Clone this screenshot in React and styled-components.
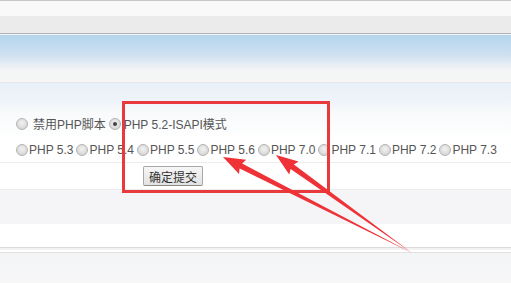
import React from 'react';
import styled, {createGlobalStyle} from 'styled-components';

const Global = createGlobalStyle`
	html, body {
		margin: 0;
		padding: 0;
		background: #fff;
	}
	body {
		font-family: "Liberation Sans", "Noto Sans CJK SC", sans-serif;
		font-size: 12px;
		color: #555;
	}
`;

const Page = styled.div`
	position: relative;
	width: 511px;
	height: 283px;
	overflow: hidden;
	display: flex;
	flex-direction: column;
`;

const TopBar = styled.div`
	height: 34px;
	box-sizing: border-box;
	border-top: 1px solid #c8c8c8;
	border-bottom: 1px solid #aeb4ba;
	background: linear-gradient(#f9f9f9 0, #f9f9f9 15px, #ebebeb 15px, #ebebeb 100%);
`;

const BlueBand = styled.div`
	height: 47px;
	border-top: 1px solid #f6f6f6;
	background: linear-gradient(#b4d5ee 0%, #cddff0 40%, #f4f5f6 75%, #f6f6f6 100%);
	border-bottom: 1px solid #e4e6e8;
`;

const SubBand = styled.div`
	height: 27px;
	background: linear-gradient(#e8f0f8, #eef3f9 60%, #f7f9fb);
`;

const Form = styled.div`
	display: flex;
	flex-direction: column;
	background: linear-gradient(#f7f9fb, #fff 30px);
`;

const Row = styled.div`
	display: flex;
	align-items: center;
	height: ${p => p.h}px;
	padding-left: ${p => p.pad ?? 16}px;
	border-bottom: ${p => p.line ? '1px solid #ececec' : 'none'};
	box-sizing: border-box;
	white-space: nowrap;
`;

const Option = styled.label`
	display: inline-flex;
	align-items: center;
	margin-right: ${p => p.gap}px;
	color: #555;
`;

const Radio = styled.span`
	width: 12px;
	height: 12px;
	border-radius: 50%;
	border: 1px solid #b4b4b4;
	box-sizing: border-box;
	background: radial-gradient(circle at 50% 40%, #f2f2f2 0%, #d8d8d8 70%, #cacaca 100%);
	margin-right: ${p => p.gap}px;
	display: inline-flex;
	align-items: center;
	justify-content: center;

	&::after {
		content: '';
		display: ${p => p.checked ? 'block' : 'none'};
		width: 4px;
		height: 4px;
		border-radius: 50%;
		background: #444;
	}
`;

const Button = styled.button`
	width: 60px;
	height: 20px;
	margin-left: 143px;
	padding: 0;
	font: inherit;
	font-size: 12px;
	color: #333;
	border: 1px solid #a8a8a8;
	border-bottom-color: #8c8c8c;
	border-radius: 2px;
	background: linear-gradient(#f6f6f6, #e2e2e2);
`;

const GrayBand = styled.div`
	height: 34px;
	background: #f5f5f7;
	border-top: 1px solid #ececec;
`;

const WhiteBand = styled.div`
	height: 23px;
	background: #fff;
`;

const FootLines = styled.div`
	height: 4px;
	border-top: 1px solid #dcdcdc;
	border-bottom: 1px solid #e2e2e2;
	background: linear-gradient(#f2f2f2 0, #f2f2f2 2px, #fff 2px);
`;

const Footer = styled.div`
	flex: 1;
	background: linear-gradient(#f4f5f7, #f7f7f8);
`;

const Highlight = styled.div`
	position: absolute;
	left: 122px;
	top: 101px;
	width: 208px;
	height: 92px;
	border: 3px solid #e83a3c;
	box-sizing: border-box;
	pointer-events: none;
`;

const Arrows = styled.svg`
	position: absolute;
	left: 0;
	top: 0;
	pointer-events: none;
`;

// arrow from tail (tx,ty) to tip (hx,hy), tapering shaft and a head
const arrowPath = (tx, ty, hx, hy) => {
	const dx = hx - tx, dy = hy - ty;
	const len = Math.hypot(dx, dy);
	const ux = dx / len, uy = dy / len;
	const nx = -uy, ny = ux;
	const headLen = 20, headW = 8, shaftW = 2.8;
	const bx = hx - ux * headLen, by = hy - uy * headLen;
	const pts = [
		[tx, ty],
		[bx + nx * shaftW, by + ny * shaftW],
		[bx + nx * headW - ux * 2, by + ny * headW - uy * 2],
		[hx, hy],
		[bx - nx * headW - ux * 2, by - ny * headW - uy * 2],
		[bx - nx * shaftW, by - ny * shaftW],
	];
	return pts.map(p => p.map(v => v.toFixed(1)).join(',')).join(' ');
};

const versions = ['5.3', '5.4', '5.5', '5.6', '7.0', '7.1', '7.2', '7.3'];

const App = () => (
	<Page>
		<Global />
		<TopBar />
		<BlueBand />
		<SubBand />
		<Form>
			<Row h={27}>
				<Option gap={3}><Radio gap={5} />禁用PHP脚本</Option>
				<Option gap={0}><Radio gap={3} checked />PHP 5.2-ISAPI模式</Option>
			</Row>
			<Row h={26} line>
				{versions.map(v => (
					<Option key={v} gap={3}><Radio gap={1} />PHP {v}</Option>
				))}
			</Row>
			<Row h={26} pad={0}>
				<Button>确定提交</Button>
			</Row>
		</Form>
		<GrayBand />
		<WhiteBand />
		<FootLines />
		<Footer />
		<Highlight />
		<Arrows width="511" height="283" viewBox="0 0 511 283">
			<polygon points={arrowPath(412, 253, 223, 157)} fill="#ee3237" />
			<polygon points={arrowPath(412, 253, 276, 155)} fill="#ee3237" />
		</Arrows>
	</Page>
);

export default App;
